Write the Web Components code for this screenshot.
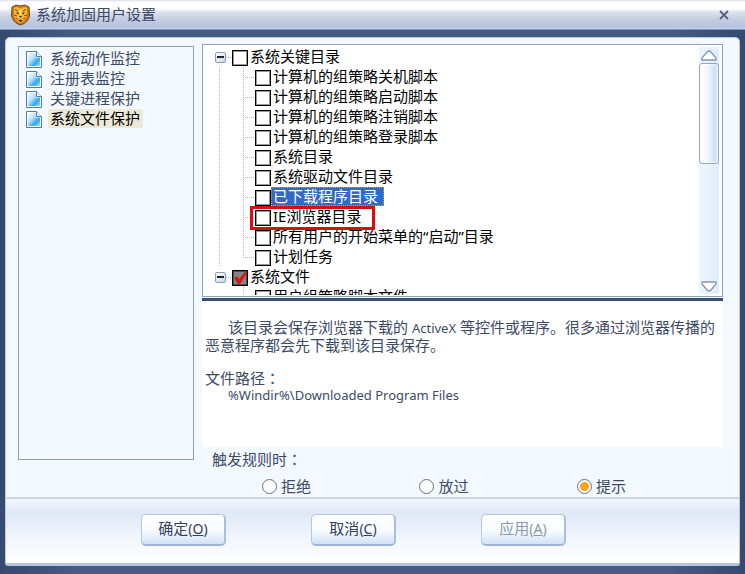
<!DOCTYPE html>
<html lang="zh-CN">
<head>
<meta charset="utf-8">
<title>系统加固用户设置</title>
<style>
  body { margin: 0; font: 15px/20px "Noto Sans", "Noto Sans CJK SC", sans-serif; color: #3c4a66; }
</style>
</head>
<body>
<settings-window></settings-window>

<script>
const define = (name, html, setup) => {
  const template = document.createElement('template');
  template.innerHTML = html;
  customElements.define(name, class extends HTMLElement {
    constructor() {
      super();
      this.attachShadow({ mode: 'open' }).append(template.content.cloneNode(true));
    }
    connectedCallback() { if (setup) setup(this, this.shadowRoot); }
  });
};

define('title-bar', `
  <style>
    :host { display: flex; align-items: center; gap: 5px; height: 30px; padding: 0 13px 0 10px; box-sizing: border-box;
      border-bottom: 1px solid #8496bb;
      background: linear-gradient(#d5dcea 0, #fff 2px, #fcfdff 9px, #dbe2ef 12px, #c4cee2 19px, #b6c4df 27px, #c2d1eb 29px); }
    h1 { flex: 1; margin: 0; padding-bottom: 2px; font: inherit; }
    button { display: grid; place-items: center; width: 16px; height: 16px; padding: 0; border: 0; background: none; }
    svg { display: block; }
  </style>
  <svg width="21" height="22" viewBox="0 0 21 22" aria-hidden="true">
    <path d="M2 3 6 1l4 1 5-1 4 2 .5 8c-.5 5-4 8.500-9 10C5.500 19.500 2 16 1.500 11Z" fill="#c87d16" stroke="#70451c"/>
    <path d="m4 4 3-1 3.500 1.500L14 3l3 1v7l-3 6-3.500 2L7 17l-3-5Z" fill="#f8b730"/>
    <path d="m5 5.500 3 1.500M16 5.500l-3 1.500M4 11l3 1M17 11l-3 1M6 14.500l2 .5M15 14.500l-2 .5" stroke="#8c4a14"/>
    <path d="m6 8 3 1-1 1.500ZM15 8l-3 1 1 1.500Z" fill="#38200c"/>
    <path d="M9 12h3l-1.500 2ZM8 16.500l2.500-1 2.500 1-2.500 1.500Z" fill="#55270c"/>
    <path d="M9.500 6h2v5h-2Z" fill="#ffe078"/>
  </svg>
  <h1><slot></slot></h1>
  <button aria-label="关闭"><svg width="10" height="10" viewBox="0 0 10 10"><path d="m1 1 8 8M9 1 1 9" stroke="#55637f" stroke-width="1.800"/></svg></button>
`);

define('nav-item', `
  <style>
    :host { display: block; }
    button { display: flex; align-items: flex-start; gap: 6px; width: 100%; height: 20px; padding: 0 0 0 7px; border: 0;
      background: none; font: inherit; color: inherit; text-align: left; }
    span { padding: 0 3px 0 2px; line-height: 19px; }
    :host([selected]) span { background: #ece9d8; color: #000; }
    svg { flex: none; margin-top: 2px; }
  </style>
  <button>
    <svg width="16" height="17" viewBox="0 0 16 17" aria-hidden="true">
      <defs><linearGradient id="g" x2="1" y2="1"><stop stop-color="#f4fbff"/><stop offset=".4" stop-color="#b4e2fb"/><stop offset=".7" stop-color="#2da6ec"/><stop offset="1" stop-color="#a5e2ff"/></linearGradient></defs>
      <path d="M.5.5h10l5 5v11H.5Z" fill="#fff" stroke="#507ba9"/>
      <path d="M2 2h8v4.500h4V15H2Z" fill="url(#g)"/>
      <path d="M10.500.5v5h5" fill="#f4fbff" stroke="#507ba9"/>
    </svg>
    <span><slot></slot></span>
  </button>
`);

define('tree-item', `
  <style>
    :host { display: block; color: #000; --dots-y: repeating-linear-gradient(#b4b4b4 0 1px, transparent 1px 2px);
      --dots-x: repeating-linear-gradient(90deg, #b4b4b4 0 1px, transparent 1px 2px); }
    .row { position: relative; display: flex; height: 20px; padding-left: 12px; }
    label { display: flex; align-items: flex-start; }
    .box { display: grid; flex: none; margin-top: 3px; }
    .box > * { grid-area: 1 / 1; }
    input { appearance: none; width: 16px; height: 16px; margin: 0; border: 1px solid #000; background: #fff;
      box-shadow: inset 0 0 0 1px #0006; }
    input:checked { background: #858585; }
    .tick { display: none; place-self: center; }
    input:checked + .tick { display: block; }
    .text { padding-left: 2px; padding-right: 6px; line-height: 19px; white-space: nowrap; }
    .toggle { align-self: center; display: grid; place-items: center; width: 11px; height: 11px; padding: 0;
      border: 1px solid #8a9dbb; border-radius: 2px; background: linear-gradient(135deg, #fff, #cdd7e6); }
    .link { width: 6px; background: var(--dots-x) 0 10px / 100% 1px no-repeat; }
    .trunk, .branch { display: none; }
    :host([child]) .toggle, :host([child]) .link { display: none; }
    :host([child]) .row { padding-left: 16px; }
    :host([child]) .trunk { display: block; width: 24px; background: var(--dots-y) 0 0 / 1px 100% no-repeat; }
    :host([tail]) .trunk { background: none !important; }
    :host([child]) .branch { display: block; width: 12px;
      background: var(--dots-y) 0 0 / 1px 100% no-repeat, var(--dots-x) 0 10px / 100% 1px no-repeat; }
    :host([end]) .branch { background-size: 1px 10px, 100% 1px !important; }
    :host([selected]) .text { background: #316ac5; color: #fff; outline: 1px dotted #c9a24a; outline-offset: -1px; }
    .mark { display: none; }
    :host([marked]) .mark { display: block; position: absolute; left: 47px; top: -1px; width: 125px; height: 24px;
      box-sizing: border-box; border: 3px solid #dd0a10; z-index: 1; pointer-events: none; }
  </style>
  <div class="row">
    <button class="toggle" aria-label="折叠"><svg width="7" height="2"><path d="M0 0h7v2H0Z" fill="#222"/></svg></button>
    <span class="link"></span><span class="trunk"></span><span class="branch"></span>
    <label>
      <span class="box"><input type="checkbox"><svg class="tick" width="13" height="12" viewBox="0 0 13 12"><path d="M0 6 3 4l2 3 6-7 2 1-7 11H4Z" fill="#d91414"/></svg></span>
      <span class="text"></span>
    </label>
    <span class="mark"></span>
  </div>
  <slot></slot>
`, (host, root) => {
  root.querySelector('.text').textContent = host.getAttribute('label');
  root.querySelector('input').checked = host.hasAttribute('checked');
  if (host.hasAttribute('child')) root.querySelector('.toggle').remove();
});

define('scroll-rail', `
  <style>
    :host { display: flex; flex-direction: column; width: 20px; background: linear-gradient(90deg, #eef5ff, #e0edfb); }
    button { display: grid; place-items: center; height: 16px; padding: 0; border: 0; background: none; }
    .track { flex: 1; }
    .thumb { height: 47%; box-sizing: border-box; border: 1px solid #98a4c4; border-radius: 3px;
      background: linear-gradient(90deg, #fff 10%, #eef5fd 45%, #cfe1f5 85%, #e5f0fc); box-shadow: inset 0 0 0 1px #fff8; }
  </style>
  <button aria-label="向上滚动"><svg width="16" height="11" viewBox="0 0 16 11"><path d="M1 10V8l5-6q2-2 4 0l5 6v2Z" fill="#fff" stroke="#8993b5" stroke-width="1.300"/></svg></button>
  <div class="track"><div class="thumb"></div></div>
  <button aria-label="向下滚动"><svg width="16" height="11" viewBox="0 0 16 11"><path d="M1 1v2l5 6q2 2 4 0l5-6V1Z" fill="#fff" stroke="#8993b5" stroke-width="1.300"/></svg></button>
`);

define('tree-panel', `
  <style>
    :host { display: flex; min-height: 0; border: 1px solid #8fa3bd; background: #fff; box-sizing: border-box; }
    .items { flex: 1; min-width: 0; overflow: hidden; margin: 2px 0 1px; }
    scroll-rail { margin: 2px 3px 2px 0; }
  </style>
  <div class="items"><slot></slot></div>
  <scroll-rail></scroll-rail>
`);

define('rule-choice', `
  <style>
    :host { display: block; }
    fieldset { margin: 0; padding: 0; border: 0; }
    legend { padding: 0 0 0 10px; line-height: 24px; }
    .colon { font-family: "Noto Sans CJK TC", sans-serif; }
    .options { display: flex; justify-content: space-between; padding: 5px 97px 1px 60px; }
    label { display: flex; align-items: center; gap: 4px; }
    input { appearance: none; width: 15px; height: 15px; margin: 0; border: 1px solid #66718f; border-radius: 50%; background: #fff; }
    input:checked { background: radial-gradient(circle, #f9a51a 0 4px, #fff 5px); }
  </style>
  <fieldset>
    <legend>触发规则时<span class="colon" lang="zh-TW">：</span></legend>
    <div class="options">
      <label><input type="radio" name="rule">拒绝</label>
      <label><input type="radio" name="rule">放过</label>
      <label><input type="radio" name="rule" checked>提示</label>
    </div>
  </fieldset>
`);

define('push-button', `
  <style>
    :host { display: block; }
    button { width: 85px; height: 32px; padding: 0 0 2px; border: 1px solid #b6c7e1; border-radius: 5px; font: inherit; color: #33415c;
      border-bottom: 2px solid #9eb4d8; border-right: 2px solid #a9bddd;
      background: linear-gradient(#fff, #fafcff 50%, #d3e2f6); white-space: nowrap; }
    button:disabled { color: #8c97ae; }
    .key { font-size: 14px; }
  </style>
  <button><slot></slot><span class="key">(<u></u>)</span></button>
`, (host, root) => {
  root.querySelector('u').textContent = host.getAttribute('key');
  root.querySelector('button').disabled = host.hasAttribute('disabled');
});

define('settings-window', `
  <style>
    :host { display: flex; flex-direction: column; height: 100vh; min-height: 480px;
      background: linear-gradient(90deg, #36496f, #465a84 10%, #465a84 90%, #36496f); }
    .panel { flex: 1; min-height: 0; display: flex; flex-direction: column; margin: 7px 5px 8px; border: 1px solid #b9cae6;
      border-bottom: 3px solid #b5c6e4; border-radius: 5px 5px 3px 3px; background: #f4f8ff; box-sizing: border-box; }
    main { flex: 1; min-height: 0; display: grid; grid-template-columns: 176px minmax(0, 1fr); gap: 8px; padding: 6px 16px 0 12px; }
    nav { margin: 2px 0 37px; padding-top: 2px; border: 1px solid #8aa0b8; box-sizing: border-box; }
    .detail { display: flex; flex-direction: column; min-height: 0; }
    tree-panel { flex: 1; }
    .about { min-height: 149px; box-sizing: border-box; padding: 18px 3px 0; background: #fff; border-top: 3px solid #3c4f73;
      margin-top: 1px; line-height: 17px; }
    p { margin: 0 0 15px; }
    .indent { text-indent: 23px; }
    .path { display: block; text-indent: 23px; }
    .latin { font-size: 13px; }
    .colon { font-family: "Noto Sans CJK TC", sans-serif; }
    footer { display: flex; justify-content: space-between; padding: 15px 173px 17px 135px; border-top: 2px solid #cbd7e9;
      background: linear-gradient(#f2f6fe, #e0e8f6 14px, #f2f6fd 40px, #fff); }
  </style>
  <title-bar>系统加固用户设置</title-bar>
  <div class="panel">
    <main>
      <nav>
        <nav-item>系统动作监控</nav-item>
        <nav-item>注册表监控</nav-item>
        <nav-item>关键进程保护</nav-item>
        <nav-item selected>系统文件保护</nav-item>
      </nav>
      <section class="detail">
        <tree-panel>
          <tree-item label="系统关键目录">
            <tree-item child label="计算机的组策略关机脚本"></tree-item>
            <tree-item child label="计算机的组策略启动脚本"></tree-item>
            <tree-item child label="计算机的组策略注销脚本"></tree-item>
            <tree-item child label="计算机的组策略登录脚本"></tree-item>
            <tree-item child label="系统目录"></tree-item>
            <tree-item child label="系统驱动文件目录"></tree-item>
            <tree-item child selected label="已下载程序目录"></tree-item>
            <tree-item child marked label="IE浏览器目录"></tree-item>
            <tree-item child label="所有用户的开始菜单的“启动”目录"></tree-item>
            <tree-item child end label="计划任务"></tree-item>
          </tree-item>
          <tree-item checked label="系统文件">
            <tree-item child tail label="用户组策略脚本文件"></tree-item>
          </tree-item>
        </tree-panel>
        <div class="about">
          <p class="indent">该目录会保存浏览器下载的 <span class="latin">ActiveX</span> <span>等控件或程序。很多通过浏览器传播的</span><span>恶意程序都会先下载到该目录保存。</span></p>
          <p>文件路径<span class="colon" lang="zh-TW">：</span><span class="path latin">%Windir%\\Downloaded Program Files</span></p>
        </div>
        <rule-choice></rule-choice>
      </section>
    </main>
    <footer>
      <push-button key="O">确定</push-button>
      <push-button key="C">取消</push-button>
      <push-button key="A" disabled>应用</push-button>
    </footer>
  </div>
`);
</script>
</body>
</html>
